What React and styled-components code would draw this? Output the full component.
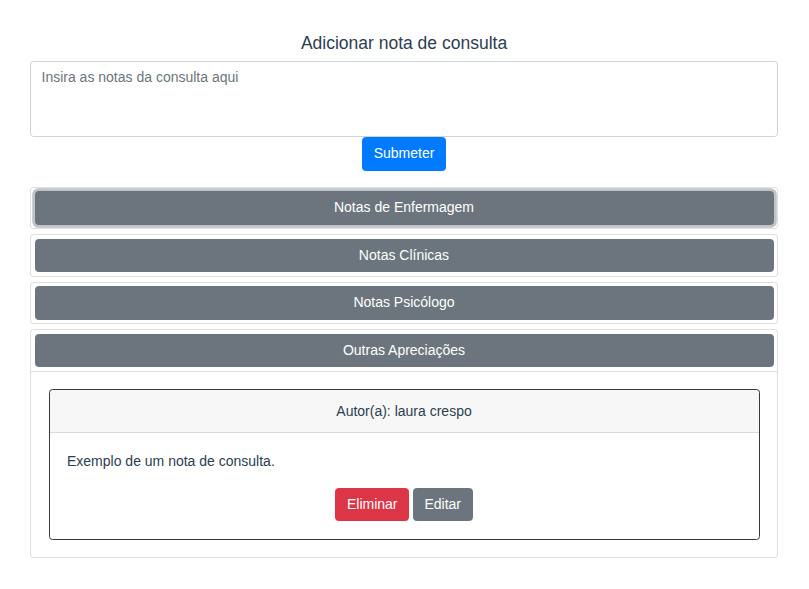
import React, { useState } from 'react';
import styled, { createGlobalStyle } from 'styled-components';

// ============================================================ styles

const GlobalStyle = createGlobalStyle`
   html { font-size: 14px; }
   body {
      margin: 0;
      background: #fff;
      color: #2c3e50;
      font-family: "Liberation Sans", Arial, Helvetica, sans-serif;
      font-size: 1rem;
      line-height: 1.5;
   }
   * { box-sizing: border-box; }
`;

const Page = styled.div`
   width: 748px;
   margin: 0 0 0 30px;
   padding-top: 32.5px;
`;

const Title = styled.h5`
   margin: 0 0 7.5px;
   font-size: 1.25rem;
   font-weight: 400;
   line-height: 1.2;
   text-align: center;
   color: #2c3e50;
`;

const NoteInput = styled.textarea`
   display: block;
   width: 100%;
   height: 76px;
   padding: .375rem .75rem;
   font: inherit;
   font-size: 1rem;
   line-height: 1.5;
   color: #495057;
   border: 1px solid #ced4da;
   border-radius: .25rem;
   resize: none;

   &::placeholder { color: #6c757d; }
`;

const Centered = styled.div`
   text-align: center;
   margin-bottom: ${p => p.$mb || 0}px;
`;

const Button = styled.button`
   display: inline-block;
   padding: .375rem .75rem;
   font: inherit;
   font-size: 1rem;
   line-height: 1.5;
   color: #fff;
   border: 1px solid ${p => p.$color};
   background: ${p => p.$color};
   border-radius: .25rem;
   cursor: pointer;
   vertical-align: middle;
`;

const Item = styled.div`
   border: 1px solid rgba(0, 0, 0, .125);
   border-radius: .25rem;
   margin-bottom: 5px;
`;

const ItemHeader = styled.div`
   padding: 3.5px;
`;

const ToggleButton = styled.button`
   display: block;
   width: 100%;
   padding: .375rem .75rem;
   font: inherit;
   font-size: 1rem;
   line-height: 1.5;
   color: #fff;
   background: #6c757d;
   border: 1px solid #6c757d;
   border-radius: .25rem;
   text-align: center;
   cursor: pointer;
   box-shadow: ${p => p.$focused ? '0 0 0 .2rem rgba(130, 138, 145, .5)' : 'none'};
   outline: none;
`;

const ItemBody = styled.div`
   border-top: 1px solid rgba(0, 0, 0, .125);
   padding: 1.25rem;
`;

const Card = styled.div`
   border: 1px solid #343a40;
   border-radius: .25rem;
`;

const CardHeader = styled.div`
   padding: 10.5px 1.25rem;
   background: rgba(0, 0, 0, .03);
   border-bottom: 1px solid rgba(0, 0, 0, .125);
   text-align: center;
`;

const CardBody = styled.div`
   padding: 1.25rem;

   p { margin: 0 0 16px; }
`;

// ============================================================ data

const sections = [
   { title: 'Notas de Enfermagem', notes: [] },
   { title: 'Notas Clínicas', notes: [] },
   { title: 'Notas Psicólogo', notes: [] },
   { title: 'Outras Apreciações', notes: [{ author: 'laura crespo', text: 'Exemplo de um nota de consulta.' }] },
];

// ============================================================ component

const App = () => {
   const [open, setOpen] = useState(3);
   const [text, setText] = useState('');

   return (
      <Page>
         <GlobalStyle />
         <Title>Adicionar nota de consulta</Title>
         <NoteInput
            rows={3}
            value={text}
            onChange={(e) => setText(e.target.value)}
            placeholder="Insira as notas da consulta aqui"
         />
         <Centered $mb={16}>
            <Button $color="#007bff">Submeter</Button>
         </Centered>

         {sections.map((s, i) => (
            <Item key={s.title}>
               <ItemHeader>
                  <ToggleButton $focused={i === 0} onClick={() => setOpen(open === i ? -1 : i)}>
                     {s.title}
                  </ToggleButton>
               </ItemHeader>
               {open === i &&
                  <ItemBody>
                     {s.notes.map((n, k) => (
                        <Card key={k}>
                           <CardHeader>Autor(a): {n.author}</CardHeader>
                           <CardBody>
                              <p>{n.text}</p>
                              <Centered>
                                 <Button $color="#dc3545">Eliminar</Button>{' '}
                                 <Button $color="#6c757d">Editar</Button>
                              </Centered>
                           </CardBody>
                        </Card>
                     ))}
                  </ItemBody>
               }
            </Item>
         ))}
      </Page>
   );
};

export default App;
